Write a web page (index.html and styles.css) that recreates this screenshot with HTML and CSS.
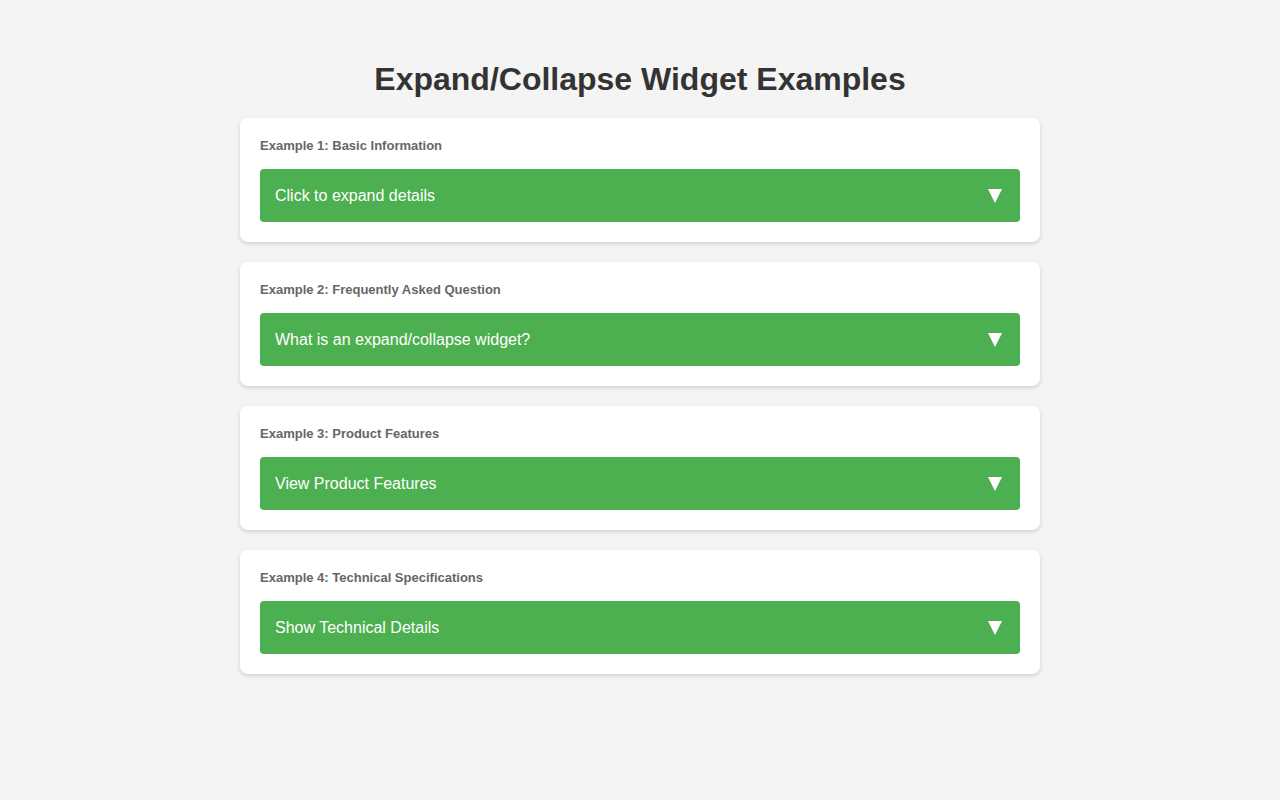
FILE: index.html
```html
<!DOCTYPE html>
<html lang="en">
<head>
<meta charset="utf-8">
<title>Expand/Collapse Widget Examples</title>
<link rel="stylesheet" href="styles.css">
</head>
<body>
<main class="page">
  <h1 class="title">Expand/Collapse Widget Examples</h1>
  <section class="card">
    <div class="label">Example 1: Basic Information</div>
    <button class="toggle"><span>Click to expand details</span><svg class="arrow" viewBox="0 0 14 14" aria-hidden="true"><polygon points="0,0 14,0 7,14"/></svg></button>
  </section>
  <section class="card">
    <div class="label">Example 2: Frequently Asked Question</div>
    <button class="toggle"><span>What is an expand/collapse widget?</span><svg class="arrow" viewBox="0 0 14 14" aria-hidden="true"><polygon points="0,0 14,0 7,14"/></svg></button>
  </section>
  <section class="card">
    <div class="label">Example 3: Product Features</div>
    <button class="toggle"><span>View Product Features</span><svg class="arrow" viewBox="0 0 14 14" aria-hidden="true"><polygon points="0,0 14,0 7,14"/></svg></button>
  </section>
  <section class="card">
    <div class="label">Example 4: Technical Specifications</div>
    <button class="toggle"><span>Show Technical Details</span><svg class="arrow" viewBox="0 0 14 14" aria-hidden="true"><polygon points="0,0 14,0 7,14"/></svg></button>
  </section>
</main>
</body>
</html>
```
FILE: styles.css
```css
html, body {
  margin: 0;
  padding: 0;
}
body {
  background: #f4f4f4;
  font-family: "Liberation Sans", Arial, sans-serif;
  color: #333;
}
.page {
  max-width: 800px;
  margin: 0 auto;
  padding: 61px 0 40px;
  display: flex;
  flex-direction: column;
  gap: 20px;
}
.title {
  margin: 0;
  font-size: 32px;
  line-height: 37px;
  font-weight: bold;
  text-align: center;
  color: #333;
}
.card {
  background: #fff;
  border-radius: 8px;
  box-shadow: 0 2px 4px rgba(0, 0, 0, 0.15);
  padding: 20px;
}
.label {
  font-size: 13px;
  line-height: 15px;
  font-weight: bold;
  color: #666;
  margin-bottom: 16px;
}
.toggle {
  display: flex;
  align-items: center;
  justify-content: space-between;
  width: 100%;
  height: 53px;
  padding: 0 15px;
  border: none;
  border-radius: 4px;
  background: #4caf50;
  color: #fff;
  font-family: "Liberation Sans", Arial, sans-serif;
  font-size: 16px;
  text-align: left;
  cursor: pointer;
}
.arrow {
  width: 14px;
  height: 14px;
  margin: 1px 3px 0 0;
  fill: #fff;
  flex-shrink: 0;
}
```
